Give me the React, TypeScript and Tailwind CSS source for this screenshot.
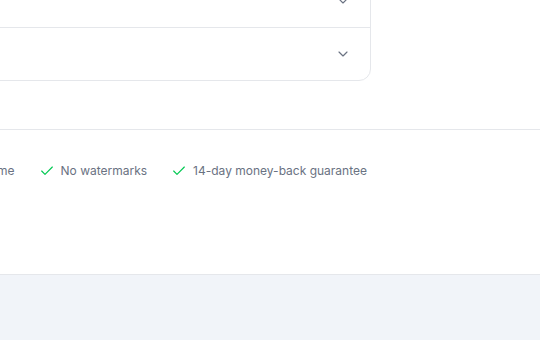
import { ChevronDown, Check } from "lucide-react";

const faqs = [
  "Can I cancel my subscription at any time?",
  "Do you offer refunds?",
];

const perks = ["Cancel anytime", "No watermarks", "14-day money-back guarantee"];

export default function App() {
  return (
    <div className="min-h-[340px] w-[540px] overflow-hidden bg-white flex flex-col font-['Inter',sans-serif]">
      {/* FAQ accordion (scrolled, only its right end is in view) */}
      <div className="-mt-[26px] -ml-[400px] w-[771px] shrink-0 mb-[48px] rounded-xl border border-gray-200 bg-white">
        {faqs.map((q, i) => (
          <div
            key={q}
            className={`flex items-center justify-between pl-5 pr-[19px] py-4 ${i > 0 ? "border-t border-gray-200" : ""}`}
          >
            <span className="text-sm font-medium text-gray-900">{q}</span>
            <ChevronDown className="h-4 w-4 text-gray-500" strokeWidth={1.75} />
          </div>
        ))}
      </div>

      {/* Trust row */}
      <div className="h-[145px] border-t border-gray-200 pt-[33px]">
        <div className="flex w-[367px] justify-end gap-6 whitespace-nowrap">
          {perks.map((p) => (
            <div key={p} className="flex shrink-0 items-center gap-1.5 text-xs text-gray-500">
              <Check className="h-4 w-4 text-green-500" strokeWidth={1.75} />
              <span>{p}</span>
            </div>
          ))}
        </div>
      </div>

      {/* Footer */}
      <div className="flex-1 border-t border-gray-200 bg-[#f1f4f9]" />
    </div>
  );
}
